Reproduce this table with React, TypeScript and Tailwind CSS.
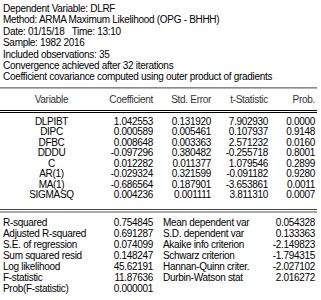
const info = [
  "Dependent Variable: DLRF",
  "Method: ARMA Maximum Likelihood (OPG - BHHH)",
  "Date: 01/15/18   Time: 13:10",
  "Sample: 1982 2016",
  "Included observations: 35",
  "Convergence achieved after 32 iterations",
  "Coefficient covariance computed using outer product of gradients",
];

const rows = [
  ["DLPIBT", "1.042553", "0.131920", "7.902930", "0.0000"],
  ["DIPC", "0.000589", "0.005461", "0.107937", "0.9148"],
  ["DFBC", "0.008648", "0.003363", "2.571232", "0.0160"],
  ["DDDU", "-0.097296", "0.380482", "-0.255718", "0.8001"],
  ["C", "0.012282", "0.011377", "1.079546", "0.2899"],
  ["AR(1)", "-0.029324", "0.321599", "-0.091182", "0.9280"],
  ["MA(1)", "-0.686564", "0.187901", "-3.653861", "0.0011"],
  ["SIGMASQ", "0.004236", "0.001111", "3.811310", "0.0007"],
];

const stats = [
  ["R-squared", "0.754845", "Mean dependent var", "0.054328"],
  ["Adjusted R-squared", "0.691287", "S.D. dependent var", "0.133363"],
  ["S.E. of regression", "0.074099", "Akaike info criterion", "-2.149823"],
  ["Sum squared resid", "0.148247", "Schwarz criterion", "-1.794315"],
  ["Log likelihood", "45.62191", "Hannan-Quinn criter.", "-2.027102"],
  ["F-statistic", "11.87636", "Durbin-Watson stat", "2.016272"],
  ["Prob(F-statistic)", "0.000001", "", ""],
];

const cols = "grid grid-cols-[103px_52px_58px_57px_47px]";

export default function App() {
  return (
    <div className="w-[321px] h-[300px] bg-white text-black text-[10px] tracking-[-0.3px] overflow-hidden" style={{ fontFamily: '"Liberation Sans", Arial, sans-serif' }}>
      <div className="pt-[3px] pl-[3px] leading-[11.4px]">
        {info.map((line) => (
          <div key={line} className="whitespace-pre">{line}</div>
        ))}
      </div>

      <div className="w-[317px] mt-[4px]">
        <div className="h-[1px] bg-[#8a8a8a]" />
        <div className="h-[1px] bg-[#b4b4b4]" />
        <div className={`${cols} h-[21px] items-center text-[#333]`}>
          <div className="text-center">Variable</div>
          <div className="text-right pr-[2px]">Coefficient</div>
          <div className="text-right pr-[2px]">Std. Error</div>
          <div className="text-right pr-[2px]">t-Statistic</div>
          <div className="text-right pr-[2px]">Prob.</div>
        </div>
        <div className="h-[1px] bg-black" />
        <div className="h-[1px]" />
        <div className="h-[1px] bg-black" />

        <div className="pt-[4px] pb-[8px] leading-[10.5px]">
          {rows.map((r) => (
            <div key={r[0]} className={cols}>
              <div className="text-center">{r[0]}</div>
              <div className="text-right pr-[2px]">{r[1]}</div>
              <div className="text-right pr-[2px]">{r[2]}</div>
              <div className="text-right pr-[2px]">{r[3]}</div>
              <div className="text-right pr-[2px]">{r[4]}</div>
            </div>
          ))}
        </div>

        <div className="h-[1px] bg-[#444]" />
        <div className="h-[1px]" />
        <div className="h-[2px] bg-[#aaa]" />

        <div className="pt-[4px] leading-[11px]">
          {stats.map((s) => (
            <div key={s[0]} className="grid grid-cols-[100px_55px_110px_52px]">
              <div className="pl-[3px]">{s[0]}</div>
              <div className="text-right pr-[2px]">{s[1]}</div>
              <div className="pl-[8px]">{s[2]}</div>
              <div className="text-right pr-[2px]">{s[3]}</div>
            </div>
          ))}
        </div>
      </div>
    </div>
  );
}
